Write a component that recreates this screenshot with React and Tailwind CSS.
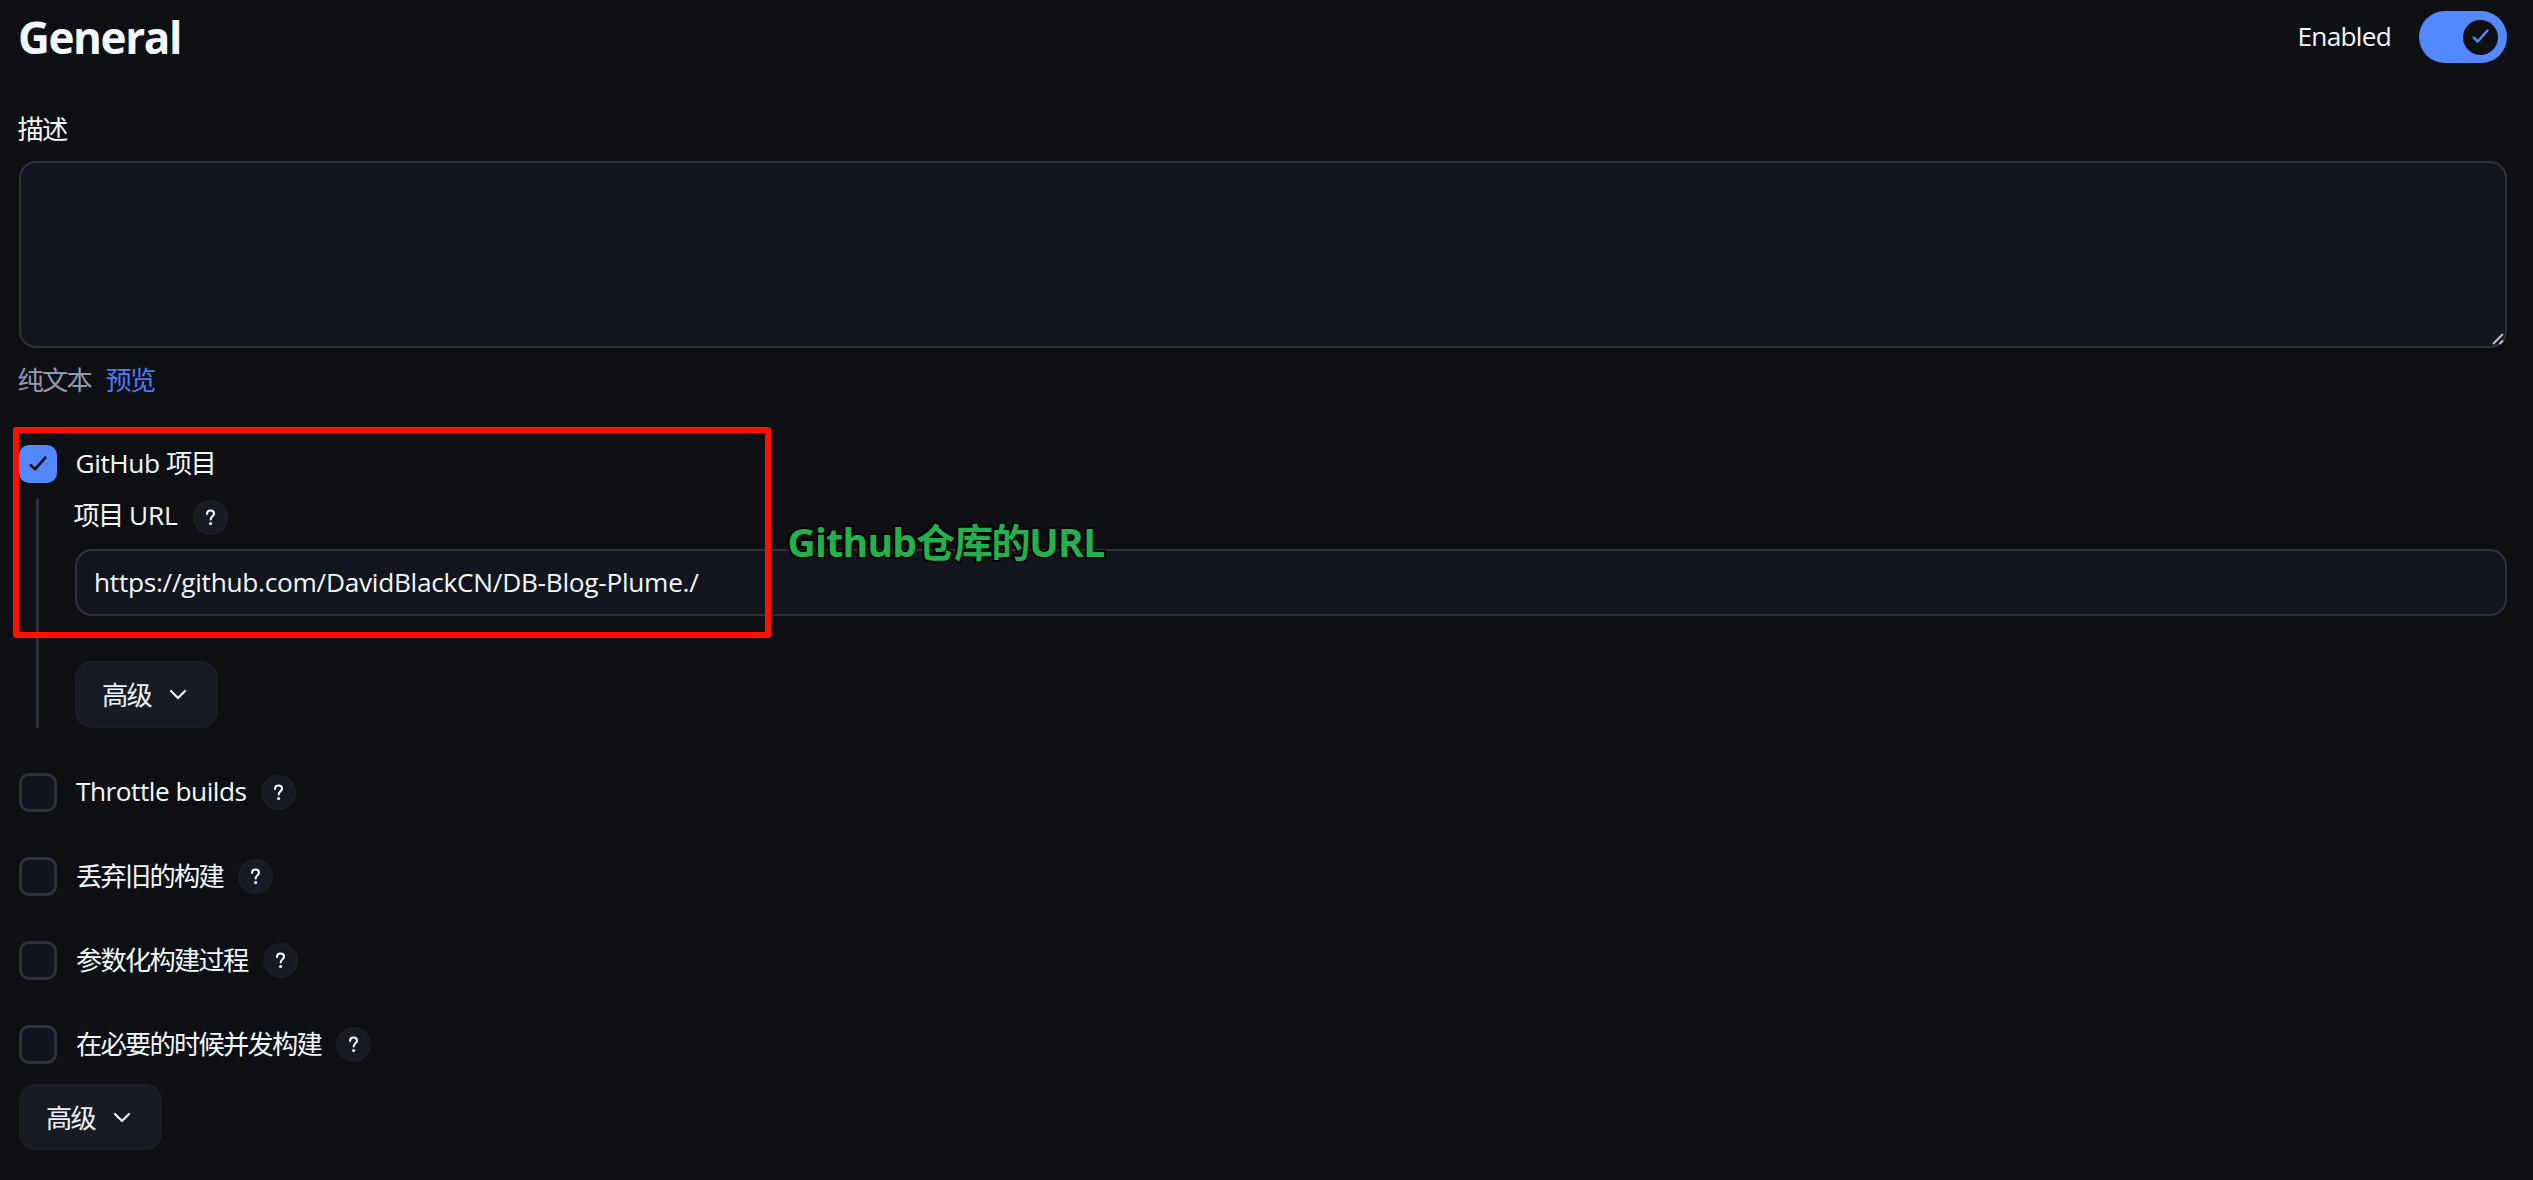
import React from "react";

const LATIN = "font-['Open_Sans','Noto_Sans_CJK_SC',sans-serif]";

function Cjk({ children }) {
  return <span className="font-['Noto_Sans_CJK_SC',sans-serif] font-normal tracking-[-1.75px]">{children}</span>;
}

function Check({ className }) {
  return (
    <svg viewBox="0 0 20 20" className={className} fill="none" stroke="currentColor" strokeLinecap="round" strokeLinejoin="round">
      <path d="M2 10.8 L6.4 15 L17.2 2.8" strokeWidth="2.8" />
    </svg>
  );
}

function Help() {
  return (
    <span className="flex size-[35px] shrink-0 items-center justify-center rounded-full border-2 border-[#1c1f26] bg-[#181b24]">
      <svg viewBox="0 0 12 18" className="h-[17px] w-[11px]" fill="none" stroke="#f4f7ff" strokeWidth="2.3" strokeLinecap="round">
        <path d="M2.2 5.2 C2.3 2.8 3.8 1.4 6 1.4 C8.3 1.4 9.8 2.8 9.8 4.8 C9.8 7.6 6.2 7.8 6.2 11.2" />
        <circle cx="6.1" cy="15.6" r="1.7" fill="#f4f7ff" stroke="none" />
      </svg>
    </span>
  );
}

function AdvancedButton({ className }) {
  return (
    <button className={`flex w-[143px] items-center rounded-[17px] border-2 border-[#1c1f26] bg-[#181b24] pl-[25px] text-[26.25px] text-[#eef2ff] ${className}`}>
      <Cjk>高级</Cjk>
      <svg viewBox="0 0 18 12" className="ml-[18px] h-[12px] w-[18px]" fill="none" stroke="currentColor" strokeWidth="2.3" strokeLinecap="round" strokeLinejoin="round">
        <path d="M2 2 L9 9 L16 2" />
      </svg>
    </button>
  );
}

function Option({ children, className }) {
  return (
    <div className="flex h-[39px] items-center">
      <span className="h-[39px] w-[38px] shrink-0 rounded-[10px] border-[3px] border-[#2d323c] bg-[#12151d]" />
      <span className={`mr-[15px] ml-[19px] text-[26.25px] leading-[37px] whitespace-nowrap ${className}`}>{children}</span>
      <Help />
    </div>
  );
}

export default function App() {
  return (
    <main className={`relative h-[1180px] w-[2533px] overflow-hidden bg-[#0f1014] pr-[26px] pl-[19px] text-[#f4f8ff] ${LATIN}`}>
      <header className="flex h-[74px] items-center justify-between">
        <h1 className="-mt-px -ml-px text-[44px] leading-[74px] font-bold tracking-[-1.4px]">General</h1>
        <div className="flex items-center gap-[28px]">
          <span className="text-[26.25px] font-[450] tracking-[-0.75px]">Enabled</span>
          <span className="flex h-[52px] w-[88px] items-center justify-end rounded-full bg-[#5388ff] pr-[9px]">
            <span className="flex size-[35px] items-center justify-center rounded-full bg-[#0f1014] text-[#5388ff]">
              <Check className="size-[18px]" />
            </span>
          </span>
        </div>
      </header>

      <div className="mt-[35px] -ml-[1.5px] h-[39px] text-[26.25px] leading-[39px]"><Cjk>描述</Cjk></div>
      <div className="mt-[13px] flex h-[187px] items-end justify-end rounded-[17px] border-2 border-[#2f323c] bg-[#13161e]">
        <svg viewBox="0 0 12 12" className="mr-[1px] mb-[1px] size-[12px]" stroke="#b9babd" strokeWidth="2.2">
          <path d="M1 11 L11 1 M7.5 11 L11 7.5" />
        </svg>
      </div>
      <div className="mt-[12px] -ml-[1.5px] flex h-[39px] gap-[14.5px] text-[26.25px] leading-[39px]">
        <span className="text-[#9499b5]"><Cjk>纯文本</Cjk></span>
        <span className="text-[#4b7bfa]"><Cjk>预览</Cjk></span>
      </div>

      <section className="mt-[46px]">
        <div className="flex h-[38px] items-center">
          <span className="flex size-[38px] items-center justify-center rounded-[10px] bg-[#5388ff] text-[#0f1014]">
            <Check className="size-[19px]" />
          </span>
          <span className="-mt-[3px] ml-[18.5px] text-[26.25px] leading-[38px] font-[450] tracking-[-0.4px] whitespace-pre">GitHub <Cjk>项目</Cjk></span>
        </div>
        <div className="mt-[15px] ml-[17px] flex h-[230px]">
          <span className="w-[3px] shrink-0 rounded-full bg-[#2d313b]" />
          <div className="flex min-w-0 grow flex-col pl-[36px]">
            <div className="flex h-[38px] items-center gap-[15px]">
              <span className="-mt-[5px] -ml-[1.5px] text-[26.25px] leading-[38px] font-[450] tracking-[-0.2px] whitespace-pre"><Cjk>项目</Cjk> URL</span>
              <Help />
            </div>
            <div className="mt-[13px] flex h-[67px] shrink-0 items-center rounded-[17px] border-2 border-[#2f323c] bg-[#13161e] pl-[17px] text-[26.25px] font-[450] tracking-[-0.28px]">
              https://github.com/DavidBlackCN/DB-Blog-Plume./
            </div>
            <AdvancedButton className="mt-[45px] h-[67px]" />
          </div>
        </div>
      </section>

      <section className="mt-[45px] flex flex-col gap-[45px]">
        <Option className="-mt-[2px] font-[450] tracking-[-0.5px]">Throttle builds</Option>
        <Option className="-mt-[1px]"><Cjk>丢弃旧的构建</Cjk></Option>
        <Option className="-mt-[1px]"><Cjk>参数化构建过程</Cjk></Option>
        <Option className="-mt-[1px]"><Cjk>在必要的时候并发构建</Cjk></Option>
      </section>
      <AdvancedButton className="mt-[20px] h-[66px] pt-[1px]" />

      <div className="absolute top-[427px] left-[13px] h-[211px] w-[758px] rounded-[3px] border-[6px] border-[#ff1000]" />
      <div className="absolute top-[512px] left-[787.5px] text-[39px] leading-[56px] font-bold whitespace-nowrap text-[#22b14c] [paint-order:stroke_fill] [-webkit-text-stroke:4px_#050706]">
        <span className="tracking-[-0.7px]">Github</span>
        <span className="font-['Noto_Sans_CJK_SC',sans-serif] tracking-[-1.4px]">仓库的</span>
        <span className="tracking-[-0.6px]">URL</span>
      </div>
    </main>
  );
}
